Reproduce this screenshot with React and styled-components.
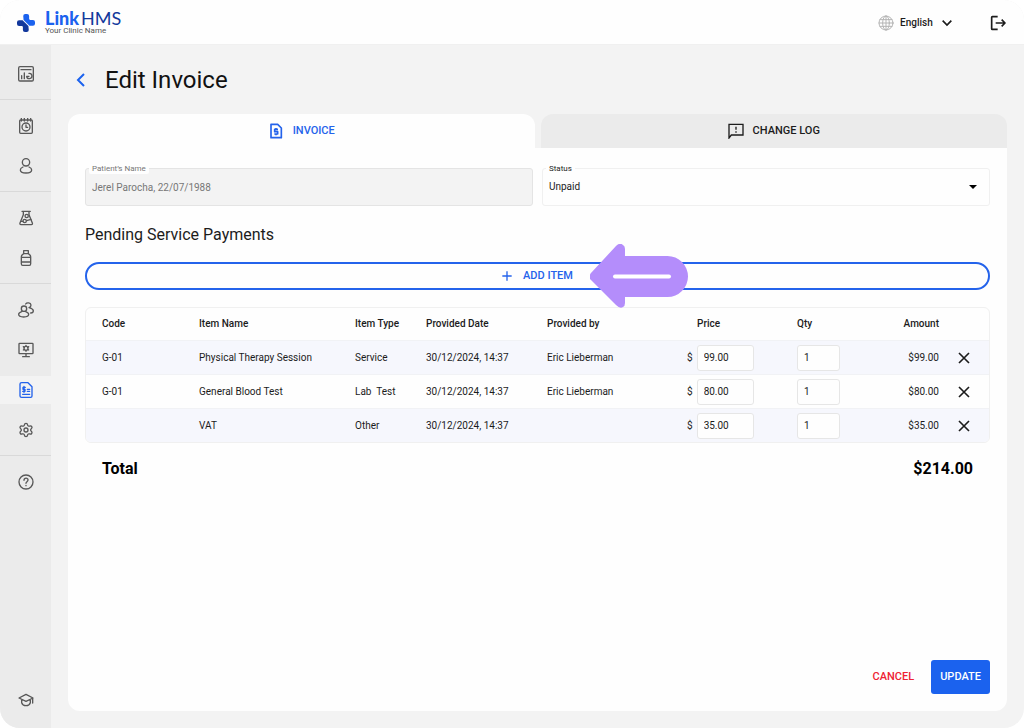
import React from 'react';
import styled, { createGlobalStyle, css } from 'styled-components';
import { Settings } from 'lucide-react';

const GlobalStyle = createGlobalStyle`
    *{
        box-sizing: border-box;
    }
    body{
        margin: 0;
        background: #ffffff;
        color: #1c1c1c;
        font-family: Roboto, "Liberation Sans", sans-serif;
        font-size: 10px;
        line-height: 16px;
    }
    button, input, select{
        font: inherit;
        color: inherit;
    }
`;

const Icon = ({ children, size = 16, box = 48, ...rest }) => (
    <svg width={size} height={size} viewBox={`0 0 ${box} ${box}`} fill="none" stroke="currentColor"
        strokeWidth="4" strokeLinecap="round" strokeLinejoin="round" aria-hidden="true" {...rest}>
        {children}
    </svg>
);

const DashboardIcon = () => (
    <Icon>
        <rect x="2" y="2" width="44" height="43" rx="4" />
        <path d="M9 11h30M11 29v9M19 21v17" />
        <path d="M33 22a8 8 0 1 1-7 9M26 31h7" />
    </Icon>
);

const AppointmentIcon = () => (
    <Icon>
        <rect x="5" y="6" width="38" height="40" rx="3" />
        <path d="M10 1v8M19 1v8M29 1v8M38 1v8" />
        <circle cx="24" cy="27" r="12" />
        <path d="M24 21v7h5" />
    </Icon>
);

const PersonIcon = () => (
    <Icon>
        <circle cx="24" cy="13" r="11" />
        <path d="M15 27c-5 2-8 5-8 9 0 6 7 9 17 9s17-3 17-9c0-4-3-7-8-9" />
    </Icon>
);

const FlaskIcon = () => (
    <Icon>
        <path d="M12 4h25M16 5v9L6 39c-1 3 0 5 3 5h31c3 0 4-2 3-5L33 14V5" />
        <circle cx="26" cy="18" r="5" />
        <circle cx="20" cy="33" r="5" />
        <path d="M9 34h6M26 32l13-4" />
    </Icon>
);

const BottleIcon = () => (
    <Icon>
        <path d="M17 2h14v9H17zM17 11c-5 3-7 5-7 9v21c0 3 1 5 4 5h20c3 0 4-2 4-5V20c0-4-2-6-7-9M10 22h28M10 36h28" />
    </Icon>
);

const UsersIcon = () => (
    <Icon>
        <circle cx="18" cy="20" r="8" />
        <path d="M11 29c-6 2-9 5-9 8 0 5 6 8 15 8s15-3 15-8c0-3-3-6-9-8" />
        <path d="M23 6c3-5 15-5 16 3 0 4-2 7-6 8 8 2 12 5 13 9 0 5-3 7-8 7" />
    </Icon>
);

const MonitorIcon = () => (
    <Icon>
        <rect x="3" y="4" width="42" height="31" rx="2" />
        <path d="M24 35v9M14 44h20" />
        <circle cx="24" cy="19" r="6" />
        <path d="M24 10v3M24 25v3M16 14l3 2M29 22l3 2M32 14l-3 2M19 22l-3 2" />
    </Icon>
);

const BillIcon = () => (
    <Icon>
        <path d="M11 2h19l12 12v28c0 3-1 4-4 4H11c-3 0-5-1-5-4V6c0-3 2-4 5-4z" />
        <path d="M22 16h-7v6h6v6h-7M18 13v18M28 22h7M28 28h7M14 37h21" />
    </Icon>
);

const HelpIcon = () => (
    <Icon>
        <circle cx="24" cy="24" r="21" />
        <path d="M18 19c0-9 13-8 12-1 0 5-6 5-6 10M24 34v1" />
    </Icon>
);

const TrainingIcon = () => (
    <Icon>
        <path d="M24 7L3 18l21 10 21-10zM11 24v8c2 6 7 9 13 9s11-3 13-9v-8M44 19v14" />
    </Icon>
);

const Logo = () => (
    <svg width="18" height="18" viewBox="0 0 52 52" role="img" aria-label="LinkHMS">
        <path fill="#1b62ee" d="M18 6q0-6 6-6h5q6 0 6 6v8q0 3 3 3h8q6 0 6 6v5q0 6-6 6H36L19 17z" />
        <path fill="#12389c" d="M34 46q0 6-6 6h-5q-6 0-6-6v-8q0-3-3-3H6q-6 0-6-6v-5q0-6 6-6h10l17 17z" />
    </svg>
);

const navSections = [
    [{ label: 'Dashboard', icon: <DashboardIcon /> }],
    [{ label: 'Appointments', icon: <AppointmentIcon /> }, { label: 'Patients', icon: <PersonIcon /> }],
    [{ label: 'Laboratory', icon: <FlaskIcon /> }, { label: 'Pharmacy', icon: <BottleIcon /> }],
    [
        { label: 'Staff', icon: <UsersIcon /> },
        { label: 'Workstations', icon: <MonitorIcon /> },
        { label: 'Invoices', icon: <BillIcon />, active: true },
        { label: 'Settings', icon: <Settings size={16} /> },
    ],
    [{ label: 'Help', icon: <HelpIcon /> }],
];

const items = [
    { code: 'G-01', name: 'Physical Therapy Session', type: 'Service', date: '30/12/2024, 14:37', by: 'Eric Lieberman', price: '99.00' },
    { code: 'G-01', name: 'General Blood Test', type: 'Lab  Test', date: '30/12/2024, 14:37', by: 'Eric Lieberman', price: '80.00' },
    { code: '', name: 'VAT', type: 'Other', date: '30/12/2024, 14:37', by: '', price: '35.00' },
];

const columns = [113, 156, 71, 121, 140, 110, 80, 62, 50];

const App = () => {
    return (
        <Shell>
            <GlobalStyle />
            <Header>
                <Brand href="#">
                    <Logo />
                    <BrandText>
                        <BrandName><b>Link</b><span>HMS</span></BrandName>
                        <Tagline>Your Clinic Name</Tagline>
                    </BrandText>
                </Brand>
                <HeaderTools>
                    <Language>
                        <Icon strokeWidth="3" stroke="#b4b4b4">
                            <circle cx="24" cy="24" r="21" />
                            <ellipse cx="24" cy="24" rx="10" ry="21" />
                            <path d="M24 3v42M3 24h42M6 14h36M6 34h36" />
                        </Icon>
                        <select aria-label="Language" defaultValue="English">
                            <option>English</option>
                        </select>
                        <Icon size={12} box={36} strokeWidth="5" strokeLinecap="butt" strokeLinejoin="miter">
                            <path d="M5 11l13 13 13-13" />
                        </Icon>
                    </Language>
                    <IconButton aria-label="Log out">
                        <Icon strokeWidth="5" strokeLinecap="butt">
                            <path d="M23 5H7q-2 0-2 2v34q0 2 2 2h16M17 24h27M35 14l10 10-10 10" />
                        </Icon>
                    </IconButton>
                </HeaderTools>
            </Header>
            <Body>
                <Sidebar>
                    {navSections.map((section, i) => (
                        <NavSection key={i}>
                            {section.map((item) => (
                                <NavLink key={item.label} href="#" aria-label={item.label} $active={item.active}>
                                    <span>{item.icon}</span>
                                </NavLink>
                            ))}
                        </NavSection>
                    ))}
                    <NavFooter>
                        <NavLink href="#" aria-label="Training"><span><TrainingIcon /></span></NavLink>
                    </NavFooter>
                </Sidebar>
                <Main>
                    <TitleRow>
                        <BackLink href="#" aria-label="Back">
                            <Icon strokeWidth="6" strokeLinecap="butt" strokeLinejoin="miter">
                                <path d="M33 6L15 24l18 18" />
                            </Icon>
                        </BackLink>
                        <h1>Edit Invoice</h1>
                    </TitleRow>
                    <Card>
                        <Tabs>
                            <Tab $active>
                                <Icon strokeWidth="5">
                                    <path d="M9 4h20l11 11v29H9z" />
                                    <path d="M30 19H20v7h9v7H19M24 15v4M24 33v4" strokeLinecap="butt" />
                                </Icon>
                                INVOICE
                            </Tab>
                            <Tab>
                                <Icon strokeLinejoin="miter">
                                    <path d="M3 45V4h42v32H10z" />
                                    <path d="M24 11v9M24 25v4" strokeLinecap="butt" />
                                </Icon>
                                CHANGE LOG
                            </Tab>
                        </Tabs>
                        <Content>
                            <Fields>
                                <Field $disabled>
                                    <label htmlFor="patient">Patient’s Name</label>
                                    <input id="patient" disabled defaultValue="Jerel Parocha, 22/07/1988" />
                                </Field>
                                <Field>
                                    <label htmlFor="status">Status</label>
                                    <select id="status" defaultValue="Unpaid">
                                        <option>Unpaid</option>
                                        <option>Paid</option>
                                    </select>
                                    <svg width="8" height="4" viewBox="0 0 8 4" aria-hidden="true"><path d="M0 0h8L4 4z" /></svg>
                                </Field>
                            </Fields>
                            <SectionTitle>Pending Service Payments</SectionTitle>
                            <AddRow>
                                <AddButton>
                                    <Icon size={10} box={30} strokeWidth="4" strokeLinecap="butt">
                                        <path d="M15 1v28M1 15h28" />
                                    </Icon>
                                    ADD ITEM
                                </AddButton>
                                <Pointer viewBox="0 0 98 64" aria-hidden="true">
                                    <path fill="#b48dfb" d="M1 29L26 2q4-4 7-1 2 1 2 4v7h42.500a20.500 20.500 0 0 1 0 41H35v6q0 3-2 4-3 2-7-2L1 36q-3-3 0-7z" />
                                    <path stroke="#fff" strokeWidth="4" strokeLinecap="round" d="M25 32.500h54" />
                                </Pointer>
                            </AddRow>
                            <TableFrame>
                                <Table>
                                    <colgroup>
                                        {columns.map((width, i) => <col key={i} width={width} />)}
                                    </colgroup>
                                    <thead>
                                        <tr>
                                            <Th>Code</Th>
                                            <Th>Item Name</Th>
                                            <Th>Item Type</Th>
                                            <Th>Provided Date</Th>
                                            <Th>Provided by</Th>
                                            <Th $indent>Price</Th>
                                            <Th>Qty</Th>
                                            <Th $right>Amount</Th>
                                            <Th />
                                        </tr>
                                    </thead>
                                    <tbody>
                                        {items.map((item) => (
                                            <tr key={item.name}>
                                                <Td>{item.code}</Td>
                                                <Td>{item.name}</Td>
                                                <Td>{item.type}</Td>
                                                <Td>{item.date}</Td>
                                                <Td>{item.by}</Td>
                                                <Td>
                                                    <Price>
                                                        $<CellInput $width={57} aria-label={`${item.name} price`} defaultValue={item.price} />
                                                    </Price>
                                                </Td>
                                                <Td><CellInput $width={43} aria-label={`${item.name} quantity`} defaultValue="1" /></Td>
                                                <Td $right>${item.price}</Td>
                                                <Td $center>
                                                    <IconButton aria-label={`Remove ${item.name}`}>
                                                        <Icon size={12} box={36} strokeWidth="5" strokeLinecap="butt">
                                                            <path d="M3 3l30 30M33 3L3 33" />
                                                        </Icon>
                                                    </IconButton>
                                                </Td>
                                            </tr>
                                        ))}
                                    </tbody>
                                </Table>
                            </TableFrame>
                            <Total>
                                <span>Total</span>
                                <span>$214.00</span>
                            </Total>
                            <Actions>
                                <CancelButton>CANCEL</CancelButton>
                                <UpdateButton>UPDATE</UpdateButton>
                            </Actions>
                        </Content>
                    </Card>
                </Main>
            </Body>
        </Shell>
    );
}

export default App;

const Shell = styled.div`
    min-height: 100vh;
    display: flex;
    flex-direction: column;
    overflow: hidden;
    border-radius: 20px;
    background: #f3f3f3;
`;

const Header = styled.header`
    height: 45px;
    flex-shrink: 0;
    padding: 1px 18px 0 17px;
    display: flex;
    align-items: center;
    justify-content: space-between;
    background: #fefefe;
    border-bottom: 1px solid #f0f0f0;
`;

const Brand = styled.a`
    display: flex;
    align-items: center;
    gap: 10px;
    text-decoration: none;
`;

const BrandText = styled.span`
    display: flex;
    flex-direction: column;
`;

const BrandName = styled.span`
    display: flex;
    gap: 2px;
    font-family: Lato, sans-serif;
    font-size: 18px;
    line-height: 17px;
    color: #12389c;
    b{
        font-weight: 900;
        color: #1b62ee;
    }
`;

const Tagline = styled.span`
    font-size: 8px;
    line-height: 8px;
    color: #555555;
`;

const HeaderTools = styled.div`
    display: flex;
    align-items: center;
    gap: 37px;
`;

const Language = styled.div`
    display: flex;
    align-items: center;
    font-weight: 500;
    select{
        appearance: none;
        border: 0;
        padding: 0;
        margin: 0 8px 0 6px;
        background: transparent;
    }
`;

const IconButton = styled.button`
    display: inline-flex;
    padding: 0;
    border: 0;
    background: none;
    vertical-align: middle;
    cursor: pointer;
`;

const Body = styled.div`
    flex: 1;
    display: flex;
`;

const Sidebar = styled.nav`
    width: 51px;
    flex-shrink: 0;
    display: flex;
    flex-direction: column;
    background: #ebebeb;
`;

const NavSection = styled.div`
    padding: 6px 0 5px;
    border-bottom: 1px solid #d9d9d9;
    &:first-child{
        padding-top: 9px;
    }
    &:nth-last-child(2){
        border-bottom: 0;
    }
`;

const NavFooter = styled.div`
    margin-top: auto;
    padding-bottom: 8px;
`;

const NavLink = styled.a`
    height: 40px;
    display: flex;
    align-items: center;
    color: ${({ $active }) => ($active ? '#2463eb' : '#585858')};
    span{
        flex: 1;
        height: 28px;
        display: flex;
        align-items: center;
        justify-content: center;
        background: ${({ $active }) => ($active ? '#f3f3f3' : 'transparent')};
    }
`;

const Main = styled.main`
    flex: 1;
    min-width: 0;
    padding: 17px;
    display: flex;
    flex-direction: column;
`;

const TitleRow = styled.div`
    display: flex;
    align-items: center;
    gap: 16px;
    padding: 2px 5px 18px;
    h1{
        margin: 0;
        font-size: 24px;
        line-height: 32px;
        font-weight: 400;
        color: #111111;
    }
`;

const BackLink = styled.a`
    display: flex;
    color: #1b62ee;
`;

const Card = styled.section`
    flex: 1;
    display: flex;
    flex-direction: column;
`;

const Tabs = styled.div`
    display: flex;
    gap: 6px;
`;

const Tab = styled.button`
    flex: 1;
    height: 34px;
    display: flex;
    align-items: center;
    justify-content: center;
    gap: 9px;
    border: 0;
    border-radius: 12px 12px 0 0;
    font-size: 11px;
    font-weight: 500;
    cursor: pointer;
    color: ${({ $active }) => ($active ? '#2463eb' : '#1c1c1c')};
    background: ${({ $active }) => ($active ? '#fefefe' : '#ebebeb')};
`;

const Content = styled.div`
    flex: 1;
    display: flex;
    flex-direction: column;
    padding: 20px 17px 17px;
    border-radius: 0 0 12px 12px;
    background: #fefefe;
`;

const Fields = styled.div`
    display: grid;
    grid-template-columns: 1fr 1fr;
    gap: 9px;
`;

const Field = styled.div`
    position: relative;
    display: flex;
    color: ${({ $disabled }) => ($disabled ? '#777777' : '#1c1c1c')};
    label{
        position: absolute;
        top: -4px;
        left: 4px;
        padding: 0 3px;
        font-size: 8px;
        line-height: 10px;
        border-radius: 2px;
        background: #fefefe;
    }
    input, select{
        width: 100%;
        height: 38px;
        padding: 0 6px;
        appearance: none;
        border: 1px solid ${({ $disabled }) => ($disabled ? '#e4e4e4' : '#f0f0f0')};
        border-radius: 3px;
        background: ${({ $disabled }) => ($disabled ? '#f3f3f3' : '#fefefe')};
    }
    svg{
        position: absolute;
        right: 13px;
        top: 17px;
    }
`;

const SectionTitle = styled.h2`
    margin: 18px 0 16px;
    font-size: 16px;
    line-height: 22px;
    font-weight: 400;
`;

const AddRow = styled.div`
    position: relative;
    display: flex;
`;

const AddButton = styled.button`
    flex: 1;
    height: 28px;
    display: flex;
    align-items: center;
    justify-content: center;
    gap: 11px;
    border: 2px solid #2463eb;
    border-radius: 14px;
    background: #fefefe;
    color: #2463eb;
    font-size: 11px;
    font-weight: 500;
    cursor: pointer;
`;

const Pointer = styled.svg`
    position: absolute;
    left: calc(50% + 52px);
    top: -18px;
    width: 98px;
    height: 64px;
    pointer-events: none;
`;

const TableFrame = styled.div`
    margin-top: 17px;
    border: 1px solid #f0f0f0;
    border-radius: 6px;
    overflow: hidden;
`;

const Table = styled.table`
    width: 100%;
    table-layout: fixed;
    border-spacing: 0;
    tbody tr:nth-child(odd){
        background: #f6f7fd;
    }
`;

const cell = css`
    padding: 0;
    text-align: ${({ $right, $center }) => ($right ? 'right' : $center ? 'center' : 'left')};
    white-space: pre;
    vertical-align: middle;
    &:first-child{
        padding-left: 16px;
    }
`;

const Th = styled.th`
    ${cell}
    height: 32px;
    font-weight: 500;
    padding-left: ${({ $indent }) => ($indent ? '10px' : '0')};
`;

const Td = styled.td`
    ${cell}
    height: 34px;
    border-top: 1px solid #f1f2f5;
`;

const Price = styled.div`
    display: flex;
    align-items: center;
    gap: 4px;
`;

const CellInput = styled.input`
    width: ${({ $width }) => $width}px;
    height: 26px;
    padding: 0 6px;
    border: 1px solid #e6e6e6;
    border-radius: 3px;
    background: #fefefe;
    vertical-align: middle;
`;

const Total = styled.div`
    display: flex;
    justify-content: space-between;
    padding: 15px 17px;
    font-size: 16px;
    line-height: 22px;
    font-weight: 700;
    color: #000000;
`;

const Actions = styled.div`
    margin-top: auto;
    display: flex;
    justify-content: flex-end;
    gap: 8px;
`;

const CancelButton = styled.button`
    height: 34px;
    padding: 0 9px;
    border: 0;
    border-radius: 3px;
    background: none;
    color: #ee2233;
    font-size: 11px;
    font-weight: 500;
    cursor: pointer;
`;

const UpdateButton = styled(CancelButton)`
    background: #1b62ee;
    color: #ffffff;
`;
